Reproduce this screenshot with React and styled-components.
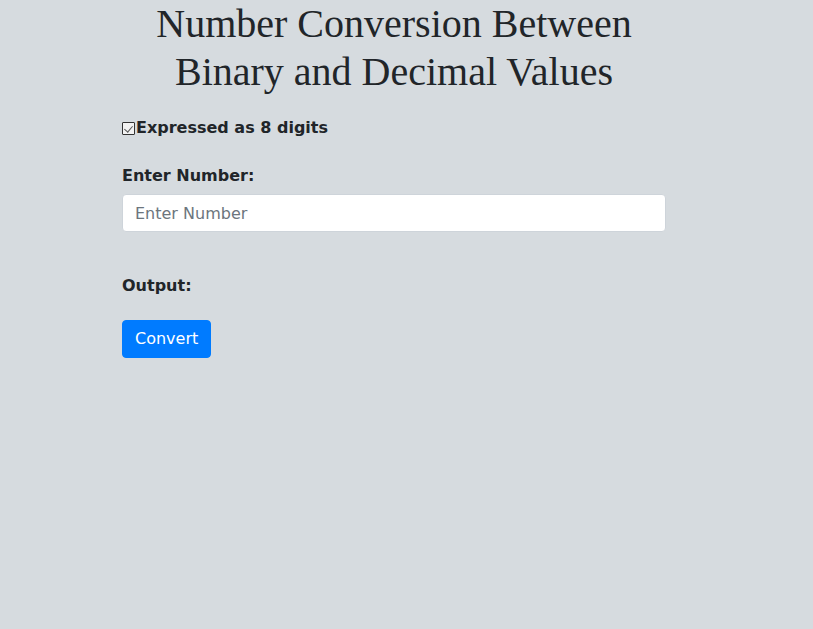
import React from "react";
import styled, { createGlobalStyle } from "styled-components";

const Global = createGlobalStyle`
  html, body { margin: 0; padding: 0; background: #d6dbdf; }
  body {
    font-family: "DejaVu Sans", sans-serif;
    font-size: 16px;
    line-height: 1.5;
    color: #212529;
    min-height: 629px;
  }
`;

const Page = styled.main`
  width: 544px;
  margin-left: 122px;
  display: flex;
  flex-direction: column;
`;

const Title = styled.h1`
  margin: 0 0 20px;
  font-family: "Liberation Serif", "Times New Roman", serif;
  font-weight: 400;
  font-size: 40px;
  line-height: 48px;
  text-align: center;
  color: #212529;
`;

const CheckRow = styled.label`
  display: flex;
  align-items: center;
  font-weight: 700;
  line-height: 24px;
  cursor: pointer;
`;

const Check = styled.input.attrs({ type: "checkbox" })`
  appearance: none;
  margin: 0 1px 0 0;
  width: 13px;
  height: 13px;
  border: 1px solid #333;
  border-radius: 1px;
  background: #f2f2f2;
  position: relative;
  box-sizing: border-box;
  &:checked::after {
    content: "";
    position: absolute;
    left: 3px;
    top: 1px;
    width: 4px;
    height: 7px;
    border: solid #555;
    border-width: 0 1.5px 1.5px 0;
    transform: rotate(40deg);
  }
`;

const Field = styled.div`
  display: flex;
  flex-direction: column;
  margin-top: 24px;
`;

const Label = styled.label`
  font-weight: 700;
  line-height: 24px;
  margin-bottom: 6px;
`;

const Input = styled.input`
  box-sizing: border-box;
  width: 100%;
  height: 38px;
  padding: 6px 12px;
  font-family: inherit;
  font-size: 16px;
  line-height: 24px;
  color: #495057;
  background: #fff;
  border: 1px solid #ced4da;
  border-radius: 4px;
  outline: none;
  &::placeholder { color: #6c757d; }
`;

const Output = styled.div`
  margin-top: 42px;
  font-weight: 700;
  line-height: 24px;
`;

const Button = styled.button`
  align-self: flex-start;
  margin-top: 22px;
  box-sizing: border-box;
  height: 38px;
  padding: 6px 12px;
  font-family: inherit;
  font-size: 16px;
  line-height: 24px;
  color: #fff;
  background: #007bff;
  border: 1px solid #007bff;
  border-radius: 4px;
  cursor: pointer;
`;

export default function App() {
  return (
    <>
      <Global />
      <Page>
        <Title>Number Conversion Between Binary and Decimal Values</Title>
        <CheckRow>
          <Check defaultChecked />
          Expressed as 8 digits
        </CheckRow>
        <Field>
          <Label htmlFor="num">Enter Number:</Label>
          <Input id="num" placeholder="Enter Number" />
        </Field>
        <Output>Output:</Output>
        <Button>Convert</Button>
      </Page>
    </>
  );
}
